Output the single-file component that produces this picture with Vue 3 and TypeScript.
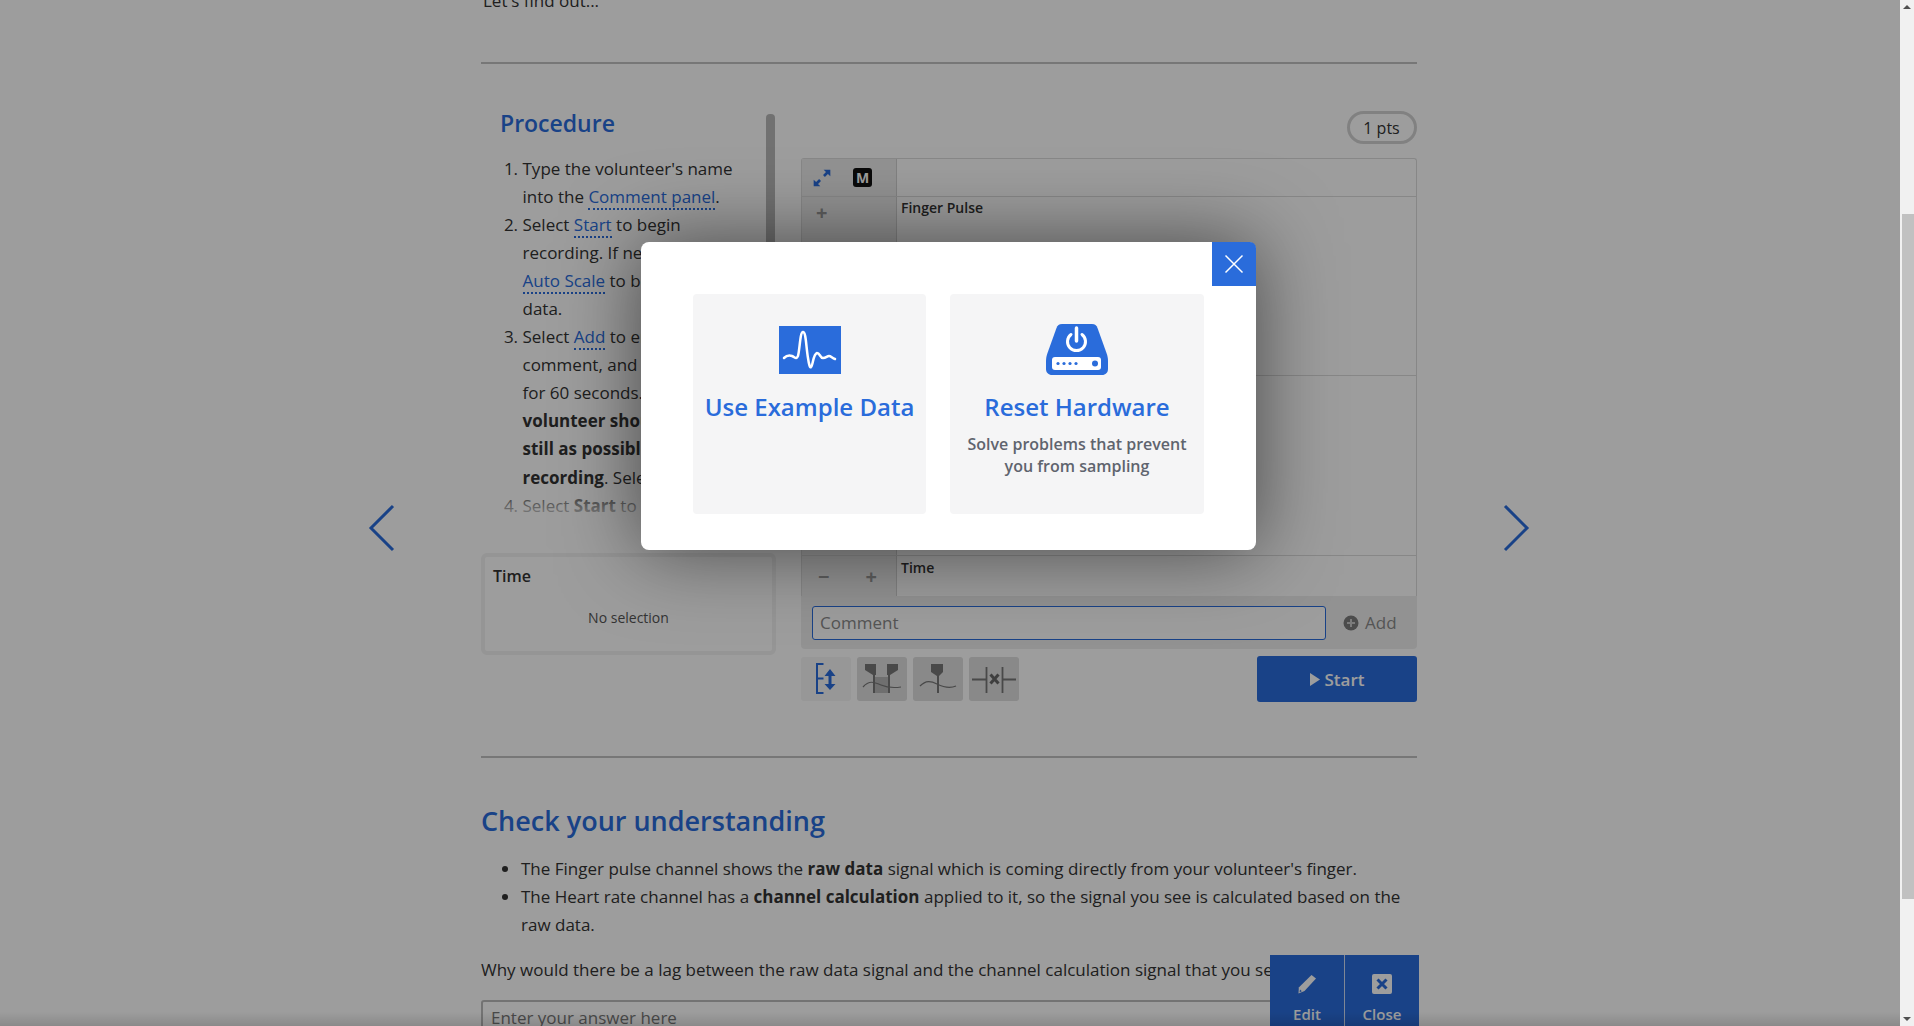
<script setup lang="ts">
import { ref } from 'vue'

const comment = ref('')
const toolButtons = ['scale', 'two', 'one', 'marker']
</script>

<template>
  <div class="app">
    <div class="viewport">
      <main class="page">
        <p class="intro">Let's find out...</p>
        <hr class="rule first" />

        <section class="activity">
          <div class="side">
            <div class="pane">
              <div class="pane-body">
                <h2>Procedure</h2>
                <ol>
                  <li>Type the volunteer's name<br />into the <a>Comment panel</a>.</li>
                  <li>Select <a>Start</a> to begin<br />recording. If necessary, use<br /><a>Auto Scale</a> to better see the<br />data.</li>
                  <li>Select <a>Add</a> to enter a<br />comment, and then wait<br />for 60 seconds. The<br /><b>volunteer should stay as</b><br /><b>still as possible during</b><br /><b>recording</b>. Select Stop.</li>
                  <li>Select <b>Start</b> to record again.</li>
                </ol>
                <div class="fade"></div>
              </div>
              <div class="pane-track"></div>
            </div>
            <div class="selection">
              <div class="selection-title">Time</div>
              <div class="selection-empty">No selection</div>
            </div>
          </div>

          <div class="main">
            <div class="pts-row"><span class="pts">1 pts</span></div>
            <div class="chart">
              <div class="row head">
                <div class="ctl">
                  <svg class="expand" width="20" height="20" viewBox="0 0 18 18">
                    <path d="M10.5 1.5h6v6l-2.200-2.100-2.700 2.700-1.700-1.700 2.700-2.700zM7.500 16.500h-6v-6l2.200 2.100 2.700-2.700 1.700 1.700-2.700 2.700z" />
                  </svg>
                  <span class="m">M</span>
                </div>
                <div class="plot"></div>
              </div>
              <div class="row channel">
                <div class="ctl top"><span class="pm">+</span></div>
                <div class="plot"><span class="label">Finger Pulse</span></div>
              </div>
              <div class="row channel second">
                <div class="ctl top"><span class="pm">+</span></div>
                <div class="plot"><span class="label">Heart Rate</span></div>
              </div>
              <div class="row axis">
                <div class="ctl spread"><span class="pm">−</span><span class="pm">+</span></div>
                <div class="plot"><span class="label">Time</span></div>
              </div>
            </div>
            <div class="comment-bar">
              <input v-model="comment" class="comment" placeholder="Comment" />
              <span class="add">
                <svg width="16" height="16" viewBox="0 0 16 16">
                  <circle cx="8" cy="8" r="7.500" fill="#7c7c7c" />
                  <path d="M8 4v8M4 8h8" stroke="#c8c8c8" stroke-width="2" />
                </svg>
                Add
              </span>
            </div>
            <div class="tools">
              <div v-for="t in toolButtons" :key="t" class="tool" :class="{ plain: t === 'scale' }">
                <svg v-if="t === 'scale'" width="50" height="44" viewBox="0 0 50 44">
                  <path d="M16 7v29M15 7h7.500M16 21.500h6.500M15 36h7.500" fill="none" stroke="#2a6cdb" stroke-width="2" />
                  <path d="M29 12l5.500 7h-4v8h4l-5.500 6-5.500-6h4v-8h-4z" fill="#2a6cdb" />
                </svg>
                <svg v-else-if="t === 'two'" width="50" height="44" viewBox="0 0 50 44">
                  <path d="M18 20h13v16H18z" fill="#b4b4b4" />
                  <path d="M8 7h11v11h-1v18h-2V18l-8-5zM41 7H30v11h1v18h2V18l8-5z" fill="#777" />
                  <path d="M6 30c6-7 11-5 18-2s13 3 20 2" fill="none" stroke="#777" stroke-width="1.200" />
                </svg>
                <svg v-else-if="t === 'one'" width="50" height="44" viewBox="0 0 50 44">
                  <path d="M18 7h12v8l-4 4v17h-2V19l-6-4z" fill="#777" />
                  <path d="M7 29c6-6 11-5 17-2s12 5 19 2" fill="none" stroke="#777" stroke-width="1.200" />
                </svg>
                <svg v-else width="50" height="44" viewBox="0 0 50 44">
                  <path d="M3 22.500h14M34 22.500h13M17.500 10v26M33.500 10v26" fill="none" stroke="#777" stroke-width="1.800" />
                  <path d="M21.500 17.500l8 9M29.500 17.500l-8 9" fill="none" stroke="#666" stroke-width="3" />
                </svg>
              </div>
              <button class="start">
                <svg width="10" height="13" viewBox="0 0 10 13"><path d="M0 0l10 6.500L0 13z" fill="#fff" /></svg>
                Start
              </button>
            </div>
          </div>
        </section>

        <hr class="rule second" />

        <h2 class="check">Check your understanding</h2>
        <ul>
          <li>The Finger pulse channel shows the <b>raw data</b> signal which is coming directly from your volunteer's finger.</li>
          <li>The Heart rate channel has a <b>channel calculation</b> applied to it, so the signal you see is calculated based on the raw data.</li>
        </ul>
        <p class="question">Why would there be a lag between the raw data signal and the channel calculation signal that you see?</p>
        <div class="answer">Enter your answer here</div>
      </main>

      <svg class="nav prev" width="30" height="50" viewBox="0 0 30 50">
        <path d="M26 3L4 25l22 22" fill="none" stroke="#2a6cdb" stroke-width="3" />
      </svg>
      <svg class="nav next" width="30" height="50" viewBox="0 0 30 50">
        <path d="M4 3l22 22L4 47" fill="none" stroke="#2a6cdb" stroke-width="3" />
      </svg>

      <div class="edit-bar">
        <div class="edit-btn">
          <svg width="20" height="20" viewBox="0 0 20 20">
            <path d="M14.500 1l4.500 3.500L7.500 17 1.500 19.500 1.800 13.500z" fill="#fff" />
            <path d="M3 15.500l1.800 1.700-2.200 1z" fill="#2a6cdb" />
          </svg>
          <span>Edit</span>
        </div>
        <div class="edit-btn">
          <svg width="20" height="20" viewBox="0 0 20 20">
            <rect width="20" height="20" rx="2" fill="#fff" />
            <path d="M5.500 5.500l9 9M14.500 5.500l-9 9" stroke="#2a6cdb" stroke-width="3" />
          </svg>
          <span>Close</span>
        </div>
      </div>
      <div class="foot-shade"></div>

      <div class="overlay">
        <div class="modal">
          <button class="modal-close" aria-label="Close">
            <svg width="20" height="20" viewBox="0 0 20 20">
              <path d="M1.500 1.500l17 17M18.500 1.500l-17 17" stroke="#fff" stroke-width="1.500" />
            </svg>
          </button>
          <div class="option narrow">
            <svg class="option-icon" width="62" height="48" viewBox="0 0 62 48">
              <rect width="62" height="48" fill="#2a6cdb" />
              <path d="M5 32c3-3 5-3 8-2s4 4 6 0c2-8 2-24 5-24s3 14 5 26c1 7 2 10 3 9 2-1 2-13 6-14 3 0 3 5 6 5s4-2 6-2 3 2 6 3" fill="none" stroke="#fff" stroke-width="2.500" stroke-linecap="round" />
            </svg>
            <div class="option-title">Use Example Data</div>
          </div>
          <div class="option wide">
            <svg class="option-icon" width="62" height="51" viewBox="0 0 62 51">
              <path d="M16 0h30c3 0 4.500 1.500 5.500 4l9 25c1 3 1.500 5 1.500 8v8c0 3.500-2.500 6-6 6H6c-3.500 0-6-2.500-6-6v-8c0-3 .5-5 1.500-8l9-25c1-2.500 2.500-4 5.500-4z" fill="#2a6cdb" />
              <rect x="6" y="33" width="49" height="13" rx="3" fill="#fff" />
              <circle cx="12" cy="39.500" r="1.600" fill="#2a6cdb" />
              <circle cx="18" cy="39.500" r="1.600" fill="#2a6cdb" />
              <circle cx="24" cy="39.500" r="1.600" fill="#2a6cdb" />
              <circle cx="30" cy="39.500" r="1.600" fill="#2a6cdb" />
              <circle cx="49" cy="39.500" r="3" fill="#2a6cdb" />
              <path d="M25 10.500a9 9 0 1 0 11 0" fill="none" stroke="#fff" stroke-width="3" stroke-linecap="round" />
              <path d="M30.500 4v13" fill="none" stroke="#fff" stroke-width="3.500" stroke-linecap="round" />
            </svg>
            <div class="option-title">Reset Hardware</div>
            <div class="option-sub">Solve problems that prevent you from sampling</div>
          </div>
        </div>
      </div>
    </div>

    <div class="scrollbar">
      <span class="arrow up"></span>
      <div class="thumb"></div>
      <span class="arrow down"></span>
    </div>
  </div>
</template>

<style>
html, body { margin: 0; height: 100%; overflow: hidden; }
</style>

<style scoped>
.app {
  display: flex;
  height: 1026px;
  overflow: hidden;
  font-family: "Open Sans", "Noto Sans", sans-serif;
  font-size: 17px;
  line-height: 28px;
  color: #333;
  background: #fff;
}
.viewport {
  position: relative;
  flex: 1;
  min-width: 0;
  overflow: hidden;
}
.page {
  width: 936px;
  margin: -13px 0 0 481px;
}
.intro { margin: 0 0 0 2px; }
.rule {
  margin: 0;
  border: 0;
  border-top: 2px solid #c2c2c2;
}
.rule.first { margin-top: 47px; }
.rule.second { margin-top: 54px; }

.activity {
  display: flex;
  gap: 25px;
  margin-top: 44px;
}
.side { width: 295px; flex-shrink: 0; }
.pane {
  display: flex;
  height: 417px;
}
.pane-body {
  position: relative;
  flex: 1;
  min-width: 0;
  padding-left: 19px;
  overflow: hidden;
  white-space: nowrap;
}
.pane-track {
  width: 9px;
  margin: 6px 1px 0 10px;
  background: #b8b8b8;
  border-radius: 4px;
}
.pane-body h2 {
  margin: 0 0 17px;
  font-size: 23px;
  line-height: 30px;
  font-weight: 600;
  color: #2a6cdb;
}
.pane-body ol {
  margin: 0;
  padding-left: 22.5px;
  line-height: 28.05px;
}
.pane-body a {
  color: #2a6cdb;
  border-bottom: 2px dotted #2a6cdb;
}
.fade {
  position: absolute;
  left: 0;
  right: 0;
  bottom: 0;
  height: 40px;
  background: linear-gradient(rgba(255, 255, 255, 0), #fff);
}
.selection {
  height: 102px;
  margin-top: 28px;
  box-sizing: border-box;
  border: 4px solid #f2f2f2;
  border-radius: 6px;
  padding: 5px 8px;
}
.selection-title { font-size: 16px; font-weight: 600; }
.selection-empty {
  margin-top: 14px;
  text-align: center;
  font-size: 14px;
  color: #555;
}

.main { flex: 1; min-width: 0; }
.pts-row {
  display: flex;
  justify-content: flex-end;
  margin-top: 3px;
}
.pts {
  box-sizing: border-box;
  width: 70px;
  height: 33px;
  padding-right: 1px;
  border: 3px solid #d2d2d2;
  border-radius: 17px;
  text-align: center;
  font-size: 16px;
  font-weight: 500;
  line-height: 28px;
}
.chart {
  margin-top: 14px;
  border: 1px solid #dcdcdc;
  border-bottom: 0;
  border-radius: 3px 3px 0 0;
}
.row {
  display: flex;
  box-sizing: border-box;
  border-bottom: 1px solid #dcdcdc;
}
.row.head { height: 38px; }
.row.channel { height: 179px; }
.row.second { height: 180px; }
.row.axis { height: 40px; border-bottom: 0; }
.row.axis .plot { padding-top: 1px; }
.ctl {
  display: flex;
  align-items: center;
  gap: 21px;
  width: 95px;
  box-sizing: border-box;
  padding-left: 10px;
  background: #eee;
  border-right: 1px solid #d2d2d2;
  flex-shrink: 0;
}
.ctl.top { align-items: flex-start; padding-left: 14px; padding-top: 2px; }
.ctl.spread { gap: 36px; padding-left: 16px; padding-top: 2px; }
.expand { fill: #2a6cdb; }
.m {
  width: 19px;
  height: 19px;
  border-radius: 3px;
  background: #111;
  color: #fff;
  font-size: 14px;
  font-weight: 700;
  line-height: 19px;
  text-align: center;
}
.pm {
  color: #999;
  font-size: 20px;
  font-weight: 700;
  line-height: 28px;
}
.plot { flex: 1; padding-left: 4px; }
.label {
  display: block;
  font-size: 14px;
  font-weight: 600;
  line-height: 22px;
}
.comment-bar {
  display: flex;
  align-items: center;
  gap: 17px;
  height: 53px;
  box-sizing: border-box;
  padding: 0 19px 0 11px;
  background: #eee;
  border-radius: 0 0 4px 4px;
}
.comment {
  width: 514px;
  height: 34px;
  box-sizing: border-box;
  border: 1.5px solid #2a6cdb;
  border-radius: 3px;
  padding: 0 7px;
  font: 17px "Open Sans", sans-serif;
  outline: none;
  background: #fff;
}
.comment::placeholder { color: #8a8a8a; }
.add {
  display: flex;
  align-items: center;
  gap: 6px;
  color: #8a8a8a;
  font-size: 17px;
  font-weight: 500;
}
.tools {
  display: flex;
  align-items: center;
  gap: 6px;
  margin-top: 7px;
}
.tool {
  display: flex;
  width: 50px;
  height: 44px;
  border-radius: 3px;
  background: #dedede;
}
.tool.plain { background: #f6f6f6; }
.start {
  display: flex;
  align-items: center;
  justify-content: center;
  gap: 5px;
  width: 160px;
  height: 46px;
  margin-left: auto;
  border: 0;
  border-radius: 3px;
  background: #2a6cdb;
  color: #fff;
  font: 600 17px "Open Sans", sans-serif;
}

.check {
  margin: 45px 0 0;
  font-size: 27px;
  line-height: 36px;
  font-weight: 600;
  color: #2a6cdb;
}
ul {
  margin: 16px 0 0;
  padding-left: 40px;
}
.question { margin: 17px 0 0; white-space: nowrap; }
.answer {
  box-sizing: border-box;
  height: 60px;
  margin-top: 16px;
  border: 2px solid #bbb;
  border-radius: 3px;
  padding: 2px 8px;
  color: #777;
}

.nav { position: absolute; top: 503px; }
.prev { left: 367px; }
.next { left: 1501px; }

.edit-bar {
  position: absolute;
  left: 1270px;
  bottom: 0;
  display: flex;
  gap: 1px;
  height: 71px;
  background: #cfdcf3;
}
.edit-btn {
  display: flex;
  flex-direction: column;
  align-items: center;
  gap: 10px;
  width: 74px;
  padding-top: 19px;
  box-sizing: border-box;
  background: #2a6cdb;
  color: #fff;
  font-size: 15px;
  font-weight: 600;
  line-height: 20px;
}
.foot-shade {
  position: absolute;
  left: 0;
  right: 0;
  bottom: 0;
  height: 14px;
  background: linear-gradient(rgba(0, 0, 0, 0), rgba(0, 0, 0, 0.12));
}

.overlay {
  position: absolute;
  inset: 0;
  background: rgba(0, 0, 0, 0.385);
}
.modal {
  position: absolute;
  left: 641px;
  top: 242px;
  display: flex;
  gap: 24px;
  width: 615px;
  height: 308px;
  box-sizing: border-box;
  padding: 52px 52px 36px;
  background: #fff;
  border-radius: 8px;
  box-shadow: 0 0 80px rgba(0, 0, 0, 0.55);
}
.modal-close {
  position: absolute;
  top: 0;
  right: 0;
  display: flex;
  align-items: center;
  justify-content: center;
  width: 44px;
  height: 44px;
  padding: 0;
  border: 0;
  border-radius: 0 6px 0 0;
  background: #2a6cdb;
}
.option {
  display: flex;
  flex-direction: column;
  align-items: center;
  box-sizing: border-box;
  background: #f5f5f6;
  border-radius: 4px;
  text-align: center;
}
.narrow { width: 233px; padding-top: 32px; }
.wide { width: 254px; padding-top: 30px; }
.option-title {
  margin-top: 17px;
  font-size: 24px;
  line-height: 32px;
  font-weight: 600;
  color: #2a6cdb;
  white-space: nowrap;
}
.wide .option-title { margin-top: 16px; }
.option-sub {
  margin-top: 10px;
  padding: 0 16px;
  font-size: 16px;
  line-height: 22px;
  font-weight: 600;
  color: #5f646e;
}

.scrollbar {
  position: relative;
  width: 14px;
  flex-shrink: 0;
  background: #f1f1f1;
}
.thumb {
  position: absolute;
  left: 2px;
  right: 0;
  top: 214px;
  height: 685px;
  background: #c1c1c1;
}
.arrow {
  position: absolute;
  left: 3px;
  width: 0;
  height: 0;
  border-left: 4px solid transparent;
  border-right: 4px solid transparent;
}
.arrow.up { top: 5px; border-bottom: 4px solid #505050; }
.arrow.down { bottom: 5px; border-top: 4px solid #505050; }
</style>
